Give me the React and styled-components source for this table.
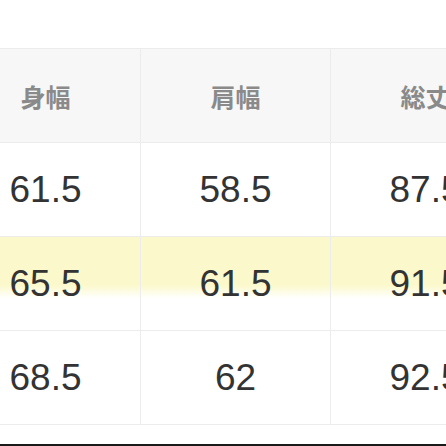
import React from "react";
import styled, { createGlobalStyle } from "styled-components";

const GlobalStyle = createGlobalStyle`
  html, body {
    margin: 0;
    padding: 0;
    background: #ffffff;
  }
  body {
    width: 446px;
    height: 446px;
    overflow: hidden;
    font-family: "Liberation Sans", "Noto Sans CJK JP", sans-serif;
  }
`;

const Page = styled.div`
  width: 446px;
  height: 446px;
  display: flex;
  flex-direction: column;
  overflow: hidden;
`;

const TopSpace = styled.div`
  height: 48px;
  flex-shrink: 0;
`;

const Table = styled.div`
  display: grid;
  grid-template-columns: 190px 190px 190px;
  margin-left: -49px;
  width: 570px;
  border-top: 1px solid #ececec;
`;

const Cell = styled.div`
  height: 94px;
  display: flex;
  align-items: center;
  justify-content: center;
  border-right: 1px solid #ececec;
  border-bottom: 1px solid #ececec;
  box-sizing: border-box;
`;

const HeadCell = styled(Cell)`
  background: #f7f7f7;
  color: #8a8a8a;
  font-family: "Noto Sans CJK JP", sans-serif;
  font-weight: 700;
  font-size: 25px;
`;

const DataCell = styled(Cell)`
  color: #333333;
  font-size: 37px;
  background: ${(p) =>
    p.$highlight
      ? "linear-gradient(to bottom, #fbf9cc 0%, #fbf9cc 52%, #ffffff 66%, #ffffff 100%)"
      : "#ffffff"};
`;

const Spacer = styled.div`
  flex: 1;
`;

const BottomEdge = styled.div`
  height: 2px;
  background: #1a1a1a;
  flex-shrink: 0;
`;

const headers = ["身幅", "肩幅", "総丈"];
const rows = [
  { values: ["61.5", "58.5", "87.5"] },
  { values: ["65.5", "61.5", "91.5"], highlight: true },
  { values: ["68.5", "62", "92.5"] },
];

const App = () => {
  return (
    <Page>
      <GlobalStyle />
      <TopSpace />
      <Table>
        {headers.map((h) => (
          <HeadCell key={h}>{h}</HeadCell>
        ))}
        {rows.map((row, i) =>
          row.values.map((v, j) => (
            <DataCell key={i + "-" + j} $highlight={row.highlight}>
              {v}
            </DataCell>
          ))
        )}
      </Table>
      <Spacer />
      <BottomEdge />
    </Page>
  );
};

export default App;
